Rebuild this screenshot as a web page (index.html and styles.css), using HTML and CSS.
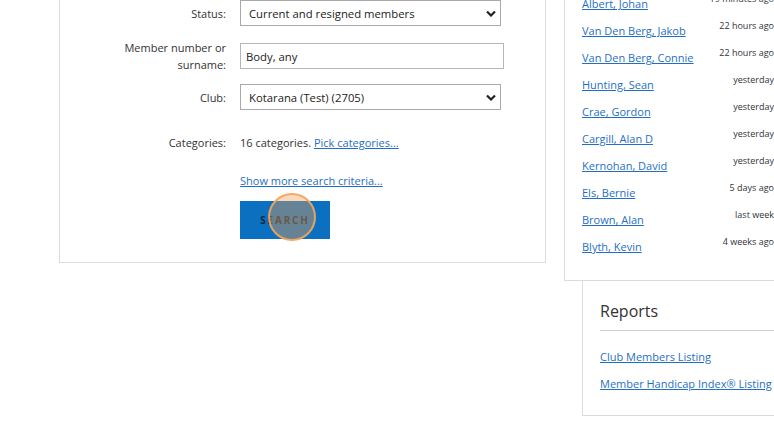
FILE: index.html
```html
<!DOCTYPE html>
<html>
<head>
  <title>Member Search</title>
  <link rel="stylesheet" href="styles.css">
</head>
<body>

  <div class="page">
    <div class="search-panel">
      <div class="form-row">
        <label class="form-label">Status:</label>
        <div class="select-wrap">
          <select class="form-select">
            <option>Current and resigned members</option>
          </select>
          <svg class="chevron" width="10" height="7" viewBox="0 0 10 7"><path d="M1 1.5 L5 5.5 L9 1.5" fill="none" stroke="#222" stroke-width="2.2"/></svg>
        </div>
      </div>

      <div class="form-row row-member">
        <label class="form-label">Member number or<br>surname:</label>
        <input class="form-input" type="text" value="Body, any">
      </div>

      <div class="form-row row-club">
        <label class="form-label">Club:</label>
        <div class="select-wrap">
          <select class="form-select">
            <option>Kotarana (Test) (2705)</option>
          </select>
          <svg class="chevron" width="10" height="7" viewBox="0 0 10 7"><path d="M1 1.5 L5 5.5 L9 1.5" fill="none" stroke="#222" stroke-width="2.2"/></svg>
        </div>
      </div>

      <div class="form-row row-categories">
        <label class="form-label">Categories:</label>
        <div class="form-text">16 categories. <a href="#">Pick categories...</a></div>
      </div>

      <div class="form-actions">
        <a href="#" class="more-link">Show more search criteria...</a>
        <button class="search-btn">SEARCH<span class="click-marker"></span></button>
      </div>
    </div>

    <div class="side">
      <div class="recent-panel">
        <ul class="recent-list">
          <li><a href="#">Albert, Johan</a><span class="when">19 minutes ago</span></li>
          <li><a href="#">Van Den Berg, Jakob</a><span class="when">22 hours ago</span></li>
          <li><a href="#">Van Den Berg, Connie</a><span class="when">22 hours ago</span></li>
          <li><a href="#">Hunting, Sean</a><span class="when">yesterday</span></li>
          <li><a href="#">Crae, Gordon</a><span class="when">yesterday</span></li>
          <li><a href="#">Cargill, Alan D</a><span class="when">yesterday</span></li>
          <li><a href="#">Kernohan, David</a><span class="when">yesterday</span></li>
          <li><a href="#">Els, Bernie</a><span class="when">5 days ago</span></li>
          <li><a href="#">Brown, Alan</a><span class="when">last week</span></li>
          <li><a href="#">Blyth, Kevin</a><span class="when">4 weeks ago</span></li>
        </ul>
      </div>

      <div class="reports-panel">
        <h2 class="reports-title">Reports</h2>
        <ul class="reports-list">
          <li><a href="#">Club Members Listing</a></li>
          <li><a href="#">Member Handicap Index® Listing</a></li>
        </ul>
      </div>
    </div>
  </div>

</body>
</html>
```

FILE: styles.css
```css
body {
  margin: 0;
  width: 774px;
  height: 434px;
  overflow: hidden;
  background: #ffffff;
  color: #333333;
  font-family: "Open Sans", Arial, sans-serif;
  font-size: 11px;
}

a {
  color: #1f6fc5;
}

.page {
  display: flex;
  align-items: flex-start;
  gap: 18px;
  margin-top: -40px;
  padding-left: 59px;
}

/* Search form */
.search-panel {
  width: 485px;
  border: 1px solid #dcdcdc;
  padding: 39px 0 23px 0;
  flex-shrink: 0;
}

.form-row {
  display: grid;
  grid-template-columns: 166px auto;
  column-gap: 14px;
  align-items: center;
}

.form-label {
  text-align: right;
  line-height: 17px;
}

.row-member {
  margin-top: 13px;
}

.row-club {
  margin-top: 11px;
}

.row-categories {
  margin-top: 24px;
}

.select-wrap {
  position: relative;
  width: 261px;
}

.form-select {
  appearance: none;
  -webkit-appearance: none;
  width: 261px;
  height: 26px;
  border: 1px solid #a9a9a9;
  border-radius: 0;
  background: #fff;
  padding: 0 8px;
  font-family: inherit;
  font-size: 11.3px;
  color: #222;
}

.chevron {
  position: absolute;
  right: 5px;
  top: 10px;
}

.form-input {
  box-sizing: border-box;
  width: 264px;
  height: 26px;
  border: 1px solid #b5b5b5;
  padding: 0 5px;
  font-family: inherit;
  font-size: 11.3px;
  color: #222;
}

.form-text {
  line-height: 17px;
}

.form-actions {
  display: flex;
  flex-direction: column;
  align-items: flex-start;
  margin-top: 21px;
  padding-left: 180px;
}

.more-link {
  line-height: 17px;
}

.search-btn {
  position: relative;
  margin-top: 12px;
  width: 90px;
  height: 38px;
  border: none;
  background: #0a70bf;
  color: #17243a;
  font-family: inherit;
  font-weight: bold;
  font-size: 10px;
  letter-spacing: 1.8px;
  padding: 0;
}

.click-marker {
  position: absolute;
  left: 28px;
  top: -8px;
  width: 44px;
  height: 44px;
  border: 2px solid rgba(245, 165, 90, 0.9);
  border-radius: 50%;
  background: rgba(240, 160, 90, 0.4);
}

/* Side column */
.side {
  display: flex;
  flex-direction: column;
  align-items: flex-start;
}

.recent-panel {
  width: 260px;
  border: 1px solid #dcdcdc;
  padding: 29px 0 20px 17px;
}

.recent-list {
  list-style: none;
  margin: 0;
  padding: 0;
  width: 192px;
}

.recent-list li {
  display: flex;
  justify-content: space-between;
  align-items: flex-start;
  height: 27px;
}

.recent-list a {
  line-height: 27px;
}

.when {
  font-size: 9px;
  line-height: 17px;
  color: #333;
}

.reports-panel {
  width: 240px;
  margin-left: 18px;
  border: 1px solid #dcdcdc;
  border-top: none;
  padding: 19px 0 18px 17px;
}

.reports-title {
  margin: 0;
  font-size: 16px;
  font-weight: normal;
  line-height: 22px;
  padding-bottom: 8px;
  border-bottom: 1px solid #cfcfcf;
}

.reports-list {
  list-style: none;
  margin: 12px 0 0 0;
  padding: 0;
}

.reports-list li {
  line-height: 27px;
  white-space: nowrap;
}
```
